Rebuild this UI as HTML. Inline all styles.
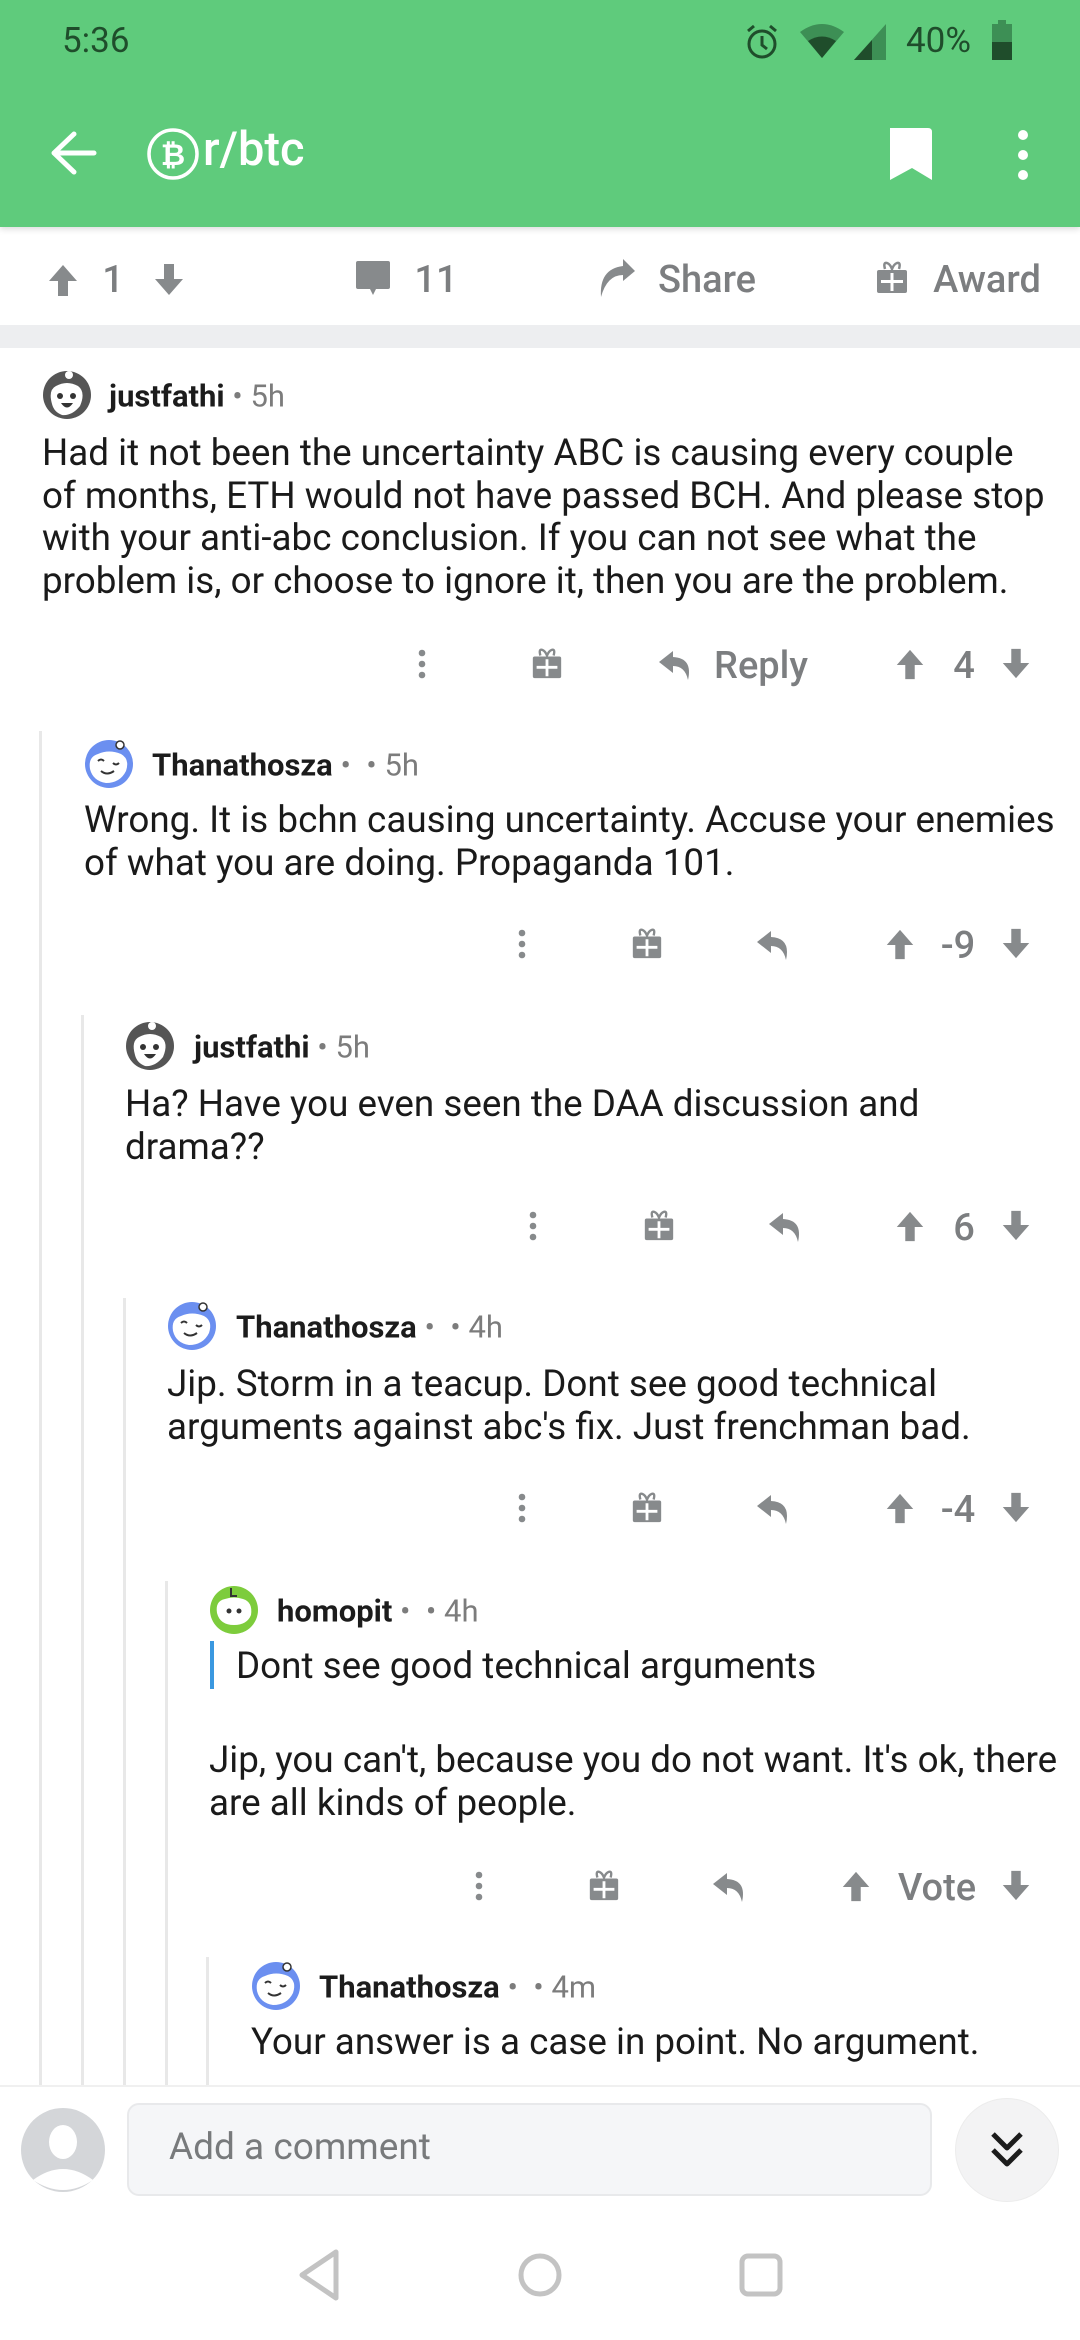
<!DOCTYPE html>
<html><head><meta charset="utf-8">
<style>
*{margin:0;padding:0;box-sizing:border-box}
body{width:1080px;height:2340px;position:relative;background:#fff;font-family:"Roboto","Liberation Sans",sans-serif;overflow:hidden;color:#1c1c1c}
.a{position:absolute}
.c{position:absolute;transform:translate(-50%,-50%)}
.hdr{left:0;top:0;width:1080px;height:227px;background:#5fcb7c;box-shadow:0 2px 6px rgba(0,0,0,.15)}
.stat{font-size:34px;color:#1f4d2b}
.g{color:#878a8c;fill:#878a8c}
.act{font-size:38px;font-weight:500;color:#7c7e80;white-space:nowrap}
.sep{left:0;top:325px;width:1080px;height:23px;background:#edeef0}
.name{font-size:31px;font-weight:bold;white-space:nowrap;transform:translateY(-50%)}
.name span{font-weight:normal;color:#7c7c7c}
.body{font-size:36.8px;line-height:42.5px;white-space:nowrap;color:#1a1a1a}
.vl{width:3px;background:#e8e8e8}
</style></head><body>
<svg width="0" height="0" style="position:absolute">
<defs>
<symbol id="up" viewBox="0 0 36 36"><path d="M18 3 L32 19 H23 V34 H13 V19 H4 Z"/></symbol>
<symbol id="dn" viewBox="0 0 36 36"><path d="M18 33 L32 17 H23 V2 H13 V17 H4 Z"/></symbol>
<symbol id="gift" viewBox="0 0 36 36"><path d="M5 10 H31 Q33 10 33 12 V31 Q33 33 31 33 H5 Q3 33 3 31 V12 Q3 10 5 10 Z"/><path d="M11 9 Q9 2 13 3 Q16 4 18 9 Q20 4 23 3 Q27 2 25 9" fill="none" stroke="#878a8c" stroke-width="2.5"/><path d="M16.5 13 H19.5 V20 H29 V23 H19.5 V31 H16.5 V23 H7 V20 H16.5 Z" fill="#fff"/></symbol>
<symbol id="reply" viewBox="0 0 36 36"><path d="M15 5 L1 16 L15 27 V20 Q27 20 30 34 Q35 12 15 11 Z"/></symbol>
<symbol id="dots" viewBox="0 0 36 36"><circle cx="18" cy="7" r="3.3"/><circle cx="18" cy="18" r="3.3"/><circle cx="18" cy="29" r="3.3"/></symbol>
<symbol id="avg" viewBox="0 0 50 50"><circle cx="25" cy="25" r="24" fill="#555"/><path d="M10 34 Q6 20 14 16 Q25 10 36 16 Q44 22 38 36 Q30 46 20 45 Q12 42 10 34Z" fill="#fff"/><circle cx="18" cy="26" r="3" fill="#333"/><circle cx="31" cy="26" r="3" fill="#333"/><path d="M19 33 Q25 42 31 33 Z" fill="#333"/><circle cx="27" cy="5" r="4" fill="#fff"/></symbol>
<symbol id="avb" viewBox="0 0 50 50"><circle cx="25" cy="25" r="24" fill="#6b8ff0"/><path d="M6 30 Q4 18 14 15 Q25 10 37 15 Q46 20 42 32 Q36 44 22 44 Q9 42 6 30Z" fill="#fff"/><path d="M14 22 q3 -3 6 0 M29 24 q3 3 6 0 M17 32 q6 5 13 0" fill="none" stroke="#333" stroke-width="2"/><circle cx="36" cy="6" r="4" fill="#fff" stroke="#333" stroke-width="1.5"/></symbol>
<symbol id="avgr" viewBox="0 0 50 50"><circle cx="25" cy="25" r="24" fill="#7dcc3c"/><path d="M8 28 Q6 16 16 14 Q25 11 34 14 Q44 17 42 30 Q38 40 25 40 Q11 40 8 28Z" fill="#fff"/><circle cx="20" cy="26" r="2.5" fill="#333"/><circle cx="30" cy="26" r="2.5" fill="#333"/><path d="M22 3 v8 h6" stroke="#333" stroke-width="2" fill="none"/></symbol>
</defs>
</svg>

<div class="a hdr"></div>
<div class="a stat" style="left:62px;top:20px;font-size:35px">5:36</div>
<svg class="a" style="left:742px;top:22px" width="40" height="40" viewBox="0 0 40 40"><circle cx="20" cy="22" r="13" fill="none" stroke="#1f4d2b" stroke-width="3"/><path d="M20 14 v9 l5 4" stroke="#1f4d2b" stroke-width="3" fill="none"/><path d="M6 9 l6 -5 M34 9 l-6 -5" stroke="#1f4d2b" stroke-width="3"/></svg>
<svg class="a" style="left:798px;top:24px" width="48" height="36" viewBox="0 0 48 36"><path d="M2 8 Q24 -8 46 8 L24 34 Z" fill="#3d8f55"/><path d="M10 17 Q24 8 38 17 L24 34 Z" fill="#1f4d2b"/></svg>
<svg class="a" style="left:852px;top:22px" width="36" height="40" viewBox="0 0 36 40"><path d="M34 2 V38 H2 Z" fill="#3d8f55"/><path d="M20 18 V38 H2 Z" fill="#1f4d2b"/></svg>
<div class="a stat" style="left:906px;top:20px;font-size:35px">40%</div>
<svg class="a" style="left:992px;top:20px" width="20" height="40" viewBox="0 0 20 40"><rect x="6" y="0" width="8" height="4" fill="#3d8f55"/><rect x="0" y="4" width="20" height="18" fill="#3d8f55"/><rect x="0" y="22" width="20" height="18" fill="#1f4d2b"/></svg>

<svg class="a" style="left:48px;top:130px" width="50" height="46" viewBox="0 0 50 46"><path d="M26 4 L6 23 L26 42 M6 23 H46" stroke="#fff" stroke-width="5" fill="none" stroke-linecap="round" stroke-linejoin="round"/></svg>
<svg class="a" style="left:145px;top:126px" width="56" height="56" viewBox="0 0 56 56"><circle cx="28" cy="28" r="24" fill="none" stroke="#fff" stroke-width="3.5"/><text x="28" y="39" text-anchor="middle" font-family="Liberation Sans" font-weight="bold" font-size="30" fill="#fff">₿</text></svg>
<div class="a" style="left:203px;top:122px;font-size:47px;color:#fff;font-weight:500">r/btc</div>
<svg class="a" style="left:886px;top:126px" width="48" height="56" viewBox="0 0 48 56"><path d="M4 2 H42 Q46 2 46 6 V54 L26 42 L4 54 Z" fill="#fff"/></svg>
<svg class="a" style="left:1008px;top:128px" width="30" height="54" viewBox="0 0 30 54"><circle cx="15" cy="7" r="5" fill="#fff"/><circle cx="15" cy="27" r="5" fill="#fff"/><circle cx="15" cy="47" r="5" fill="#fff"/></svg>

<!-- post actions -->
<svg class="c g" style="left:63px;top:280px" width="36" height="38"><use href="#up"/></svg>
<div class="c act" style="left:113px;top:280px">1</div>
<svg class="c g" style="left:169px;top:280px" width="36" height="38"><use href="#dn"/></svg>
<svg class="c g" style="left:373px;top:278px" width="38" height="38" viewBox="0 0 38 38"><path d="M4 2 H34 Q36 2 36 4 V28 Q36 30 34 30 H22 L19 36 L16 30 H4 Q2 30 2 28 V4 Q2 2 4 2Z"/></svg>
<div class="c act" style="left:436px;top:280px">11</div>
<svg class="c g" style="left:617px;top:278px" width="40" height="42" viewBox="0 0 40 42"><path d="M26 2 L38 14 L26 24 V18 Q10 18 4 40 Q2 12 26 9 Z"/></svg>
<div class="c act" style="left:707px;top:280px">Share</div>
<svg class="c g" style="left:892px;top:278px" width="36" height="38"><use href="#gift"/></svg>
<div class="c act" style="left:987px;top:280px">Award</div>

<div class="a sep"></div>

<!-- thread lines -->
<div class="a vl" style="left:39px;top:731px;height:1355px"></div>
<div class="a vl" style="left:81px;top:1015px;height:1071px"></div>
<div class="a vl" style="left:123px;top:1298px;height:788px"></div>
<div class="a vl" style="left:165px;top:1581px;height:505px"></div>
<div class="a vl" style="left:206px;top:1957px;height:129px"></div>

<!-- C1 -->
<svg class="a" style="left:42px;top:370px" width="50" height="50"><use href="#avg"/></svg>
<div class="a name" style="left:109px;top:396px">justfathi <span>• 5h</span></div>
<div class="a body" style="left:42px;top:432px">Had it not been the uncertainty ABC is causing every couple<br>of months, ETH would not have passed BCH. And please stop<br>with your anti-abc conclusion. If you can not see what the<br>problem is, or choose to ignore it, then you are the problem.</div>
<svg class="c g" style="left:422px;top:664px" width="36" height="36"><use href="#dots"/></svg>
<svg class="c g" style="left:547px;top:664px" width="34" height="36"><use href="#gift"/></svg>
<svg class="c g" style="left:676px;top:664px" width="38" height="36"><use href="#reply"/></svg>
<div class="c act" style="left:761px;top:666px">Reply</div>
<svg class="c g" style="left:910px;top:664px" width="34" height="36"><use href="#up"/></svg>
<div class="c act" style="left:964px;top:666px">4</div>
<svg class="c g" style="left:1016px;top:664px" width="34" height="36"><use href="#dn"/></svg>

<!-- C2 -->
<svg class="a" style="left:84px;top:739px" width="50" height="50"><use href="#avb"/></svg>
<div class="a name" style="left:152px;top:765px">Thanathosza <span>• &nbsp;• 5h</span></div>
<div class="a body" style="left:84px;top:799px">Wrong. It is bchn causing uncertainty. Accuse your enemies<br>of what you are doing. Propaganda 101.</div>
<svg class="c g" style="left:522px;top:944px" width="36" height="36"><use href="#dots"/></svg>
<svg class="c g" style="left:647px;top:944px" width="34" height="36"><use href="#gift"/></svg>
<svg class="c g" style="left:774px;top:944px" width="38" height="36"><use href="#reply"/></svg>
<svg class="c g" style="left:900px;top:944px" width="34" height="36"><use href="#up"/></svg>
<div class="c act" style="left:958px;top:946px">-9</div>
<svg class="c g" style="left:1016px;top:944px" width="34" height="36"><use href="#dn"/></svg>

<!-- C3 -->
<svg class="a" style="left:125px;top:1021px" width="50" height="50"><use href="#avg"/></svg>
<div class="a name" style="left:194px;top:1047px">justfathi <span>• 5h</span></div>
<div class="a body" style="left:125px;top:1083px">Ha? Have you even seen the DAA discussion and<br>drama??</div>
<svg class="c g" style="left:533px;top:1226px" width="36" height="36"><use href="#dots"/></svg>
<svg class="c g" style="left:659px;top:1226px" width="34" height="36"><use href="#gift"/></svg>
<svg class="c g" style="left:786px;top:1226px" width="38" height="36"><use href="#reply"/></svg>
<svg class="c g" style="left:910px;top:1226px" width="34" height="36"><use href="#up"/></svg>
<div class="c act" style="left:964px;top:1228px">6</div>
<svg class="c g" style="left:1016px;top:1226px" width="34" height="36"><use href="#dn"/></svg>

<!-- C4 -->
<svg class="a" style="left:167px;top:1301px" width="50" height="50"><use href="#avb"/></svg>
<div class="a name" style="left:236px;top:1327px">Thanathosza <span>• &nbsp;• 4h</span></div>
<div class="a body" style="left:167px;top:1363px">Jip. Storm in a teacup. Dont see good technical<br>arguments against abc's fix. Just frenchman bad.</div>
<svg class="c g" style="left:522px;top:1508px" width="36" height="36"><use href="#dots"/></svg>
<svg class="c g" style="left:647px;top:1508px" width="34" height="36"><use href="#gift"/></svg>
<svg class="c g" style="left:774px;top:1508px" width="38" height="36"><use href="#reply"/></svg>
<svg class="c g" style="left:900px;top:1508px" width="34" height="36"><use href="#up"/></svg>
<div class="c act" style="left:958px;top:1510px">-4</div>
<svg class="c g" style="left:1016px;top:1508px" width="34" height="36"><use href="#dn"/></svg>

<!-- C5 -->
<svg class="a" style="left:209px;top:1585px" width="50" height="50"><use href="#avgr"/></svg>
<div class="a name" style="left:277px;top:1611px">homopit <span>• &nbsp;• 4h</span></div>
<div class="a" style="left:210px;top:1641px;width:4px;height:48px;background:#3a98e0"></div>
<div class="a body" style="left:236px;top:1645px">Dont see good technical arguments</div>
<div class="a body" style="left:209px;top:1739px">Jip, you can't, because you do not want. It's ok, there<br>are all kinds of people.</div>
<svg class="c g" style="left:479px;top:1886px" width="36" height="36"><use href="#dots"/></svg>
<svg class="c g" style="left:604px;top:1886px" width="34" height="36"><use href="#gift"/></svg>
<svg class="c g" style="left:730px;top:1886px" width="38" height="36"><use href="#reply"/></svg>
<svg class="c g" style="left:856px;top:1886px" width="34" height="36"><use href="#up"/></svg>
<div class="c act" style="left:937px;top:1888px">Vote</div>
<svg class="c g" style="left:1016px;top:1886px" width="34" height="36"><use href="#dn"/></svg>

<!-- C6 -->
<svg class="a" style="left:251px;top:1961px" width="50" height="50"><use href="#avb"/></svg>
<div class="a name" style="left:319px;top:1987px">Thanathosza <span>• &nbsp;• 4m</span></div>
<div class="a body" style="left:251px;top:2021px">Your answer is a case in point. No argument.</div>

<!-- bottom bar -->
<div class="a" style="left:0;top:2085px;width:1080px;height:255px;background:#fff;border-top:2px solid #f0f0f0"></div>
<svg class="a" style="left:21px;top:2108px" width="84" height="84" viewBox="0 0 84 84"><circle cx="42" cy="42" r="42" fill="#d4d6d9"/><ellipse cx="42" cy="34" rx="14" ry="17" fill="#fff"/><path d="M12 72 Q42 50 72 72 Q42 92 12 72Z" fill="#fff"/></svg>
<div class="a" style="left:127px;top:2103px;width:805px;height:93px;background:#f5f6f8;border:2px solid #e8e9eb;border-radius:12px"></div>
<div class="a" style="left:169px;top:2126px;font-size:37px;color:#787a7c">Add a comment</div>
<div class="a" style="left:955px;top:2098px;width:104px;height:104px;border-radius:52px;background:#f3f3f4;border:1px solid #ececec"></div>
<svg class="a" style="left:985px;top:2128px" width="44" height="44" viewBox="0 0 44 44"><path d="M8 6 L22 20 L36 6 M8 22 L22 36 L36 22" stroke="#1c1c1c" stroke-width="5" fill="none" stroke-linejoin="round"/></svg>

<!-- nav -->
<svg class="a" style="left:296px;top:2248px" width="50" height="54" viewBox="0 0 50 54"><path d="M40 4 V50 L6 27 Z" fill="none" stroke="#c3c3c3" stroke-width="5" stroke-linejoin="round"/></svg>
<svg class="a" style="left:516px;top:2251px" width="48" height="48" viewBox="0 0 48 48"><circle cx="24" cy="24" r="19" fill="none" stroke="#c3c3c3" stroke-width="5"/></svg>
<svg class="a" style="left:738px;top:2252px" width="46" height="46" viewBox="0 0 46 46"><rect x="4" y="4" width="38" height="38" rx="6" fill="none" stroke="#c3c3c3" stroke-width="5"/></svg>
</body></html>
